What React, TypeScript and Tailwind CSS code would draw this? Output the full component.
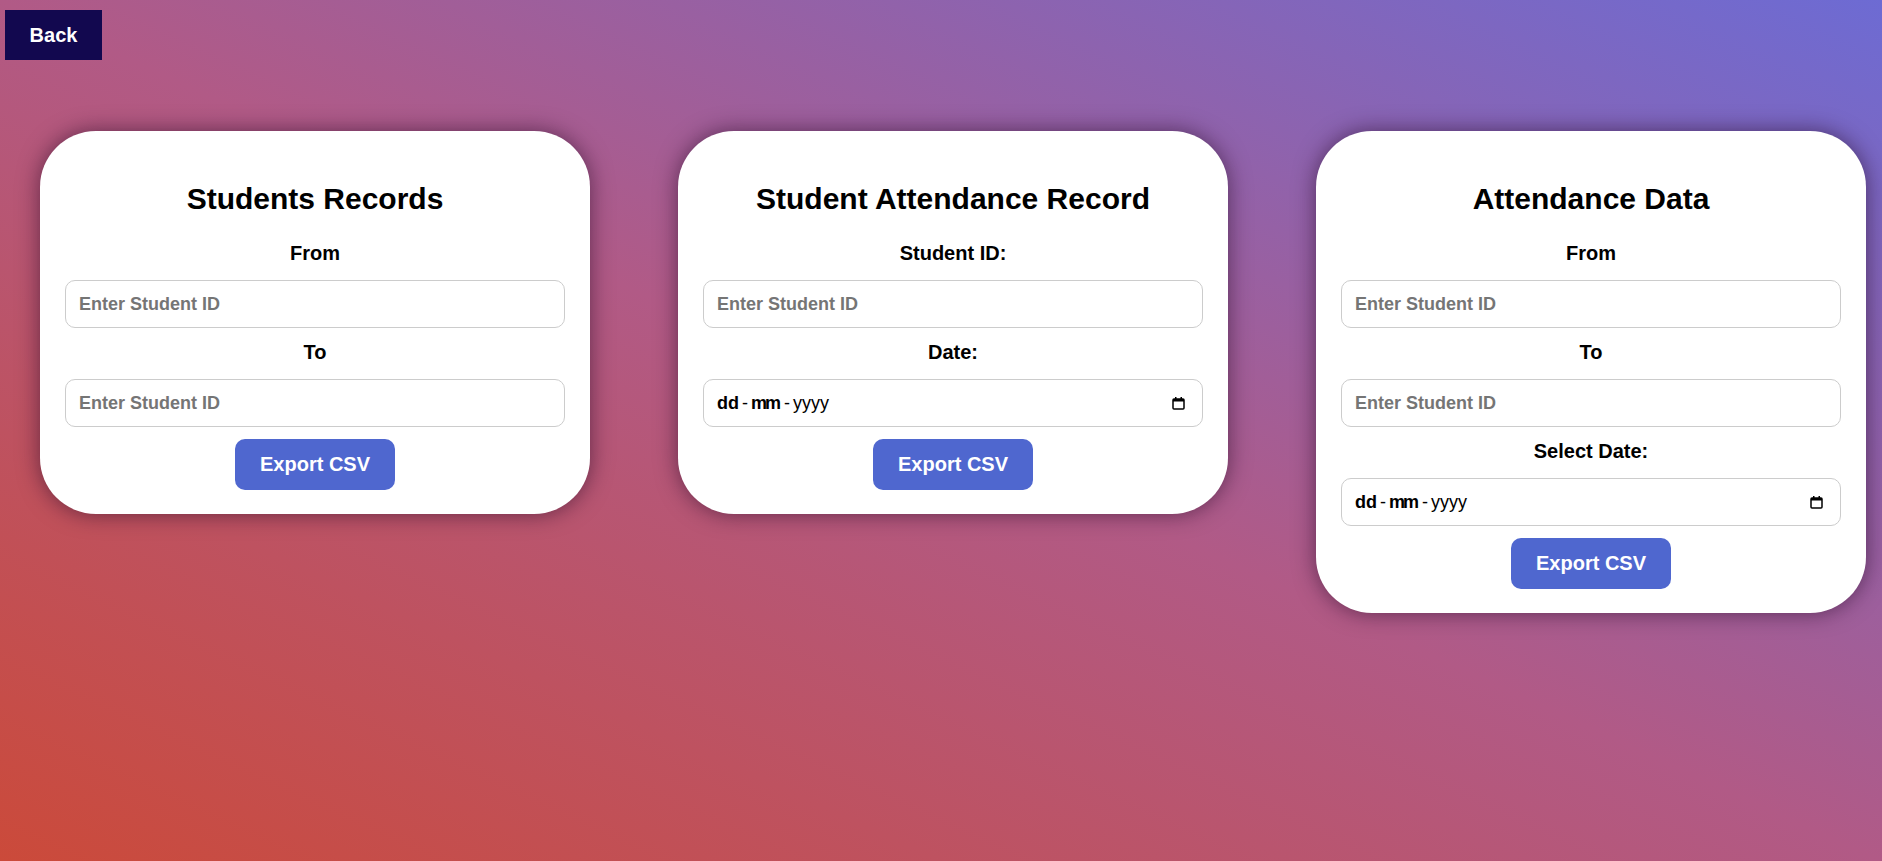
import React from 'react';

const font = { fontFamily: '"Liberation Sans", Arial, sans-serif' };

function Label({ children }: { children: React.ReactNode }) {
  return (
    <label className="block text-center text-[20px] font-bold leading-[23px] text-black mt-[13px] mb-[15px]">
      {children}
    </label>
  );
}

function TextInput() {
  return (
    <input
      type="text"
      placeholder="Enter Student ID"
      className="block w-full h-[48px] px-[13px] rounded-[10px] border border-[#cccccc] bg-white text-[18px] font-bold text-black placeholder:text-[#757575] outline-none"
    />
  );
}

function CalendarIcon() {
  return (
    <svg width="13" height="14" viewBox="0 0 13 14" className="shrink-0">
      <rect x="1" y="3" width="11" height="10" rx="1" fill="none" stroke="#000" strokeWidth="1.5" />
      <rect x="1" y="3" width="11" height="2.5" fill="#000" />
      <rect x="3" y="1" width="1.5" height="3" fill="#000" />
      <rect x="8.5" y="1" width="1.5" height="3" fill="#000" />
    </svg>
  );
}

function DateInput() {
  return (
    <div className="flex items-center justify-between w-full h-[48px] pl-[13px] pr-[17px] rounded-[10px] border border-[#cccccc] bg-white text-[18px] text-black">
      <span className="flex items-center">
        <span className="font-bold">dd</span>
        <span className="px-[3px]">-</span>
        <span className="font-bold tracking-[-2px]">mm</span>
        <span className="pl-[5px] pr-[3px]">-</span>
        <span>yyyy</span>
      </span>
      <CalendarIcon />
    </div>
  );
}

function ExportButton() {
  return (
    <div className="flex justify-center mt-[12px]">
      <button className="h-[51px] px-[25px] rounded-[10px] bg-[#4f67cf] text-white text-[20px] font-bold leading-[23px]">
        Export CSV
      </button>
    </div>
  );
}

function Card({ title, children }: { title: string; children: React.ReactNode }) {
  return (
    <div className="w-[550px] shrink-0 bg-white rounded-[56px] px-[25px] pt-[25px] pb-[24px] shadow-[0_0_22px_rgba(40,10,40,0.6)]">
      <h2 className="text-center text-[30px] font-bold leading-[35px] text-black mt-[25px] mb-[26px]">{title}</h2>
      {children}
      <ExportButton />
    </div>
  );
}

export default function App() {
  return (
    <div
      style={font}
      className="min-h-[861px] w-full bg-[linear-gradient(to_top_right,#cb4a3a,#b15a86,#6d6bd3)]"
    >
      <div className="pt-[10px] pl-[5px]">
        <button className="h-[50px] w-[97px] bg-[#12084f] text-white text-[20px] font-bold">Back</button>
      </div>

      <div className="flex items-start gap-[88px] pl-[40px] mt-[71px]">
        <Card title="Students Records">
          <Label>From</Label>
          <TextInput />
          <Label>To</Label>
          <TextInput />
        </Card>

        <Card title="Student Attendance Record">
          <Label>Student ID:</Label>
          <TextInput />
          <Label>Date:</Label>
          <DateInput />
        </Card>

        <Card title="Attendance Data">
          <Label>From</Label>
          <TextInput />
          <Label>To</Label>
          <TextInput />
          <Label>Select Date:</Label>
          <DateInput />
        </Card>
      </div>
    </div>
  );
}
